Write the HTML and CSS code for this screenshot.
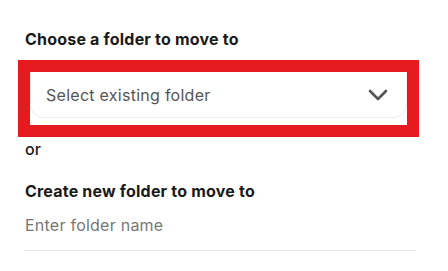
FILE: index.html
```html
<!DOCTYPE html>
<html>
<head>
<meta charset="utf-8">
<link rel="stylesheet" href="styles.css">
</head>
<body>
<div class="panel">
  <h2 class="label first">Choose a folder to move to</h2>
  <div class="highlight">
    <div class="select">
      <span class="select-text">Select existing folder</span>
      <svg class="chevron" width="20" height="12" viewBox="0 0 20 12"><path d="M2 2 L10 10 L18 2" fill="none" stroke="#555" stroke-width="2.6" stroke-linecap="round" stroke-linejoin="round"/></svg>
    </div>
  </div>
  <div class="or">or</div>
  <h2 class="label second">Create new folder to move to</h2>
  <div class="input">Enter folder name</div>
</div>
</body>
</html>
```
FILE: styles.css
```css
html, body { margin: 0; padding: 0; background: #fff; }
body { font-family: Inter, "Noto Sans", sans-serif; color: #1a1a1a; }
.panel { padding: 29px 29px 0 18px; display: flex; flex-direction: column; }
.label { margin: 0; font-size: 16px; font-weight: 700; line-height: 20px; padding-left: 7px; letter-spacing: 0.2px; }
.first { margin-bottom: 11px; }
.highlight { border: 12px solid #e51b20; background: #fff; height: 53px; box-sizing: content-box; }
.select { height: 46px; box-sizing: border-box; border: 1px solid #eeeeee; border-top: none; border-radius: 0 0 14px 14px; display: flex; align-items: center; justify-content: space-between; padding: 0 18px 0 15px; }
.select-text { font-size: 16px; color: #555; letter-spacing: 0.27px; }
.chevron { display: block; }
.or { font-size: 16px; font-weight: 500; line-height: 20px; padding-left: 7px; margin-top: 2px; }
.second { margin-top: 22px; }
.input { margin: 14px 3px 0 6px; font-size: 16px; color: #777; line-height: 20px; padding: 0 0 15px 1px; border-bottom: 1px solid #e8e8e8; letter-spacing: 0.24px; }
```
